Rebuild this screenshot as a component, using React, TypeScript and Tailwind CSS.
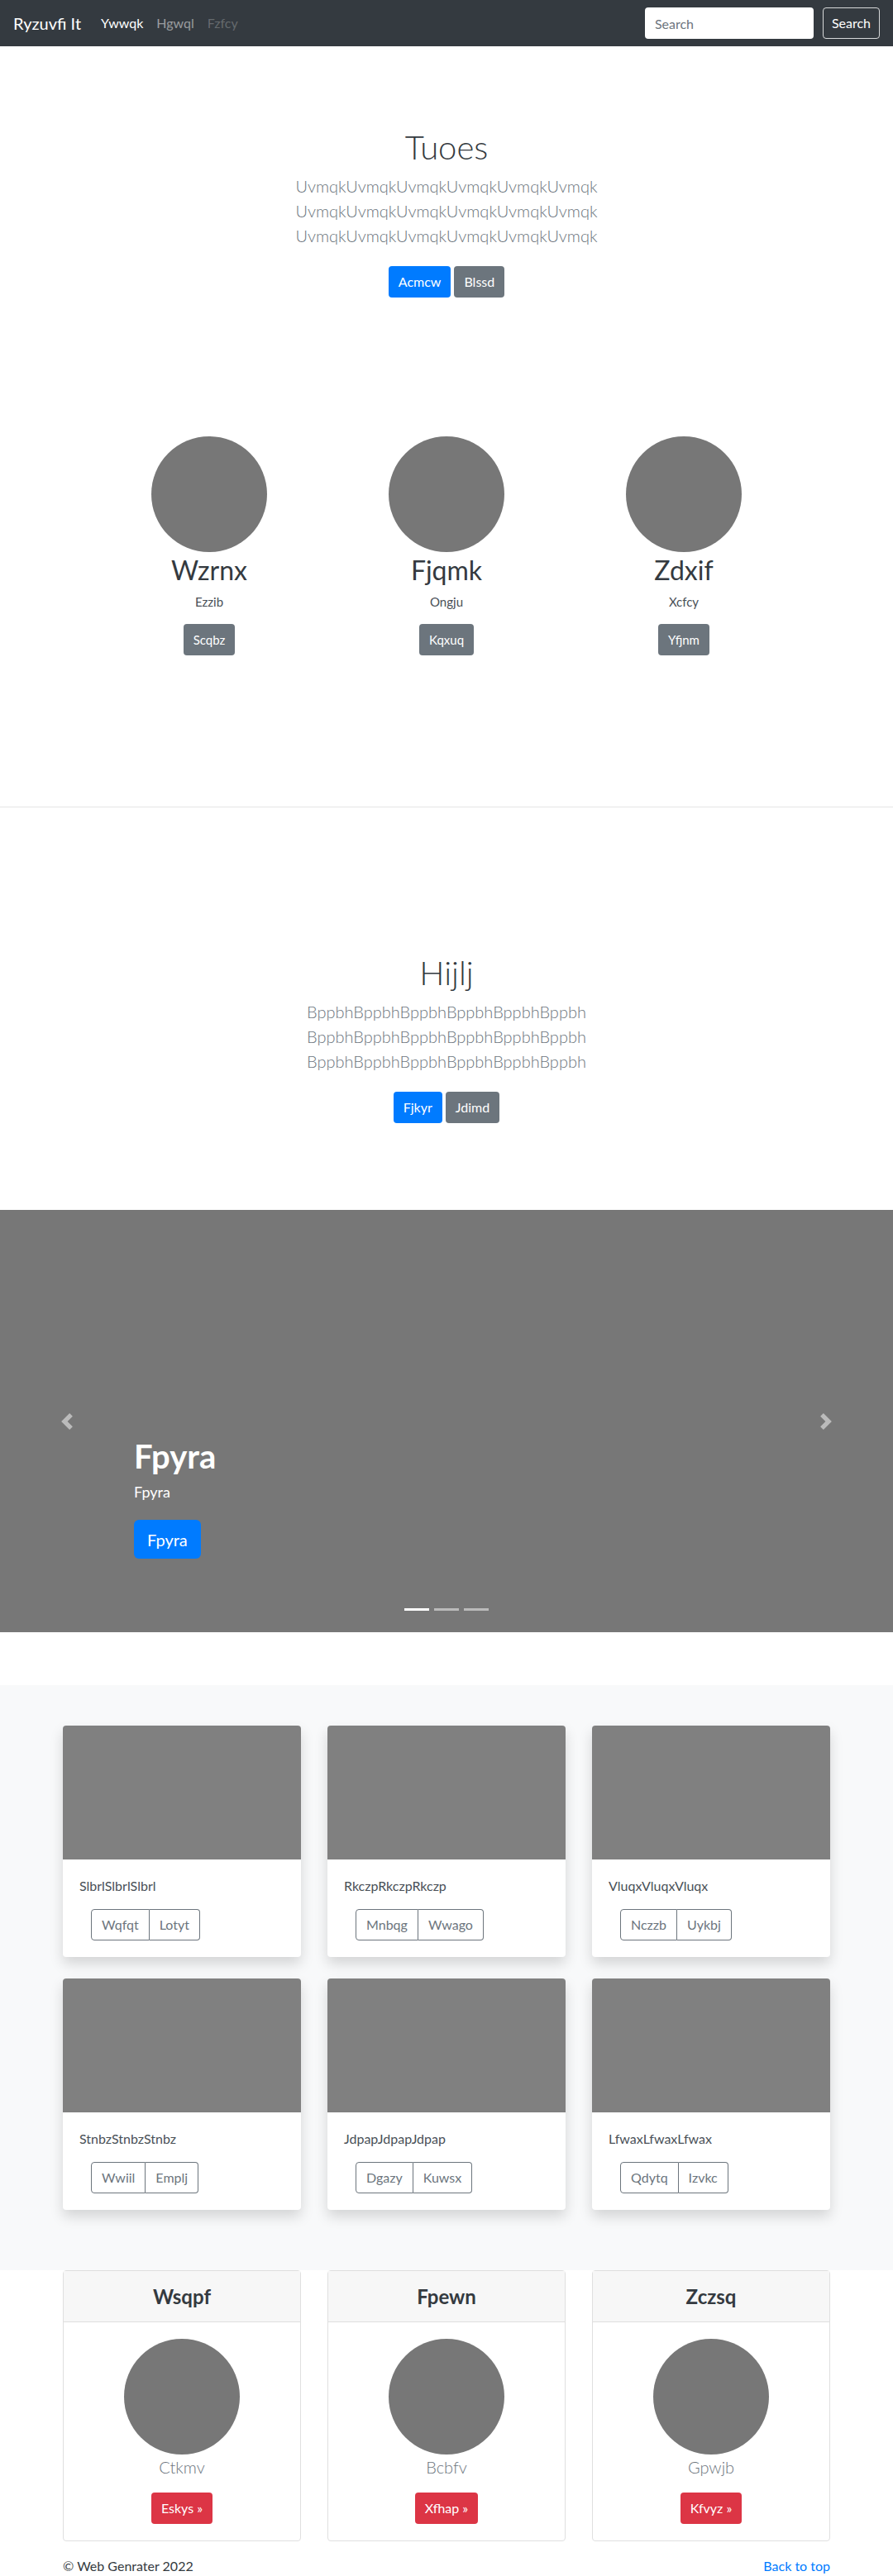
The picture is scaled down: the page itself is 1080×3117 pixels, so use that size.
import React from 'react';

const font = "font-['Lato',sans-serif]";

const Chevron: React.FC<{ dir: 'left' | 'right' }> = ({ dir }) => (
  <svg width="20" height="20" viewBox="0 0 8 8" className="opacity-50">
    <path
      fill="#fff"
      d={dir === 'left' ? 'M5.25 0l-4 4 4 4 1.5-1.5L4.25 4l2.5-2.5L5.25 0z' : 'M2.75 0l-1.5 1.5L3.75 4l-2.5 2.5L2.75 8l4-4-4-4z'}
    />
  </svg>
);

const Circle: React.FC = () => <div className="w-[140px] h-[140px] rounded-full bg-[#777] mx-auto" />;

const Jumbo: React.FC<{ title: string; word: string; primary: string; secondary: string }> = ({ title, word, primary, secondary }) => (
  <div className="text-center">
    <h1 className="text-[40px] leading-[48px] font-light text-[#343a40]">{title}</h1>
    <p className="mt-2 text-[20px] leading-[30px] font-light text-[#6c757d]">
      {word.repeat(6)}
      <br />
      {word.repeat(6)}
      <br />
      {word.repeat(6)}
    </p>
    <div className="mt-[22px] flex justify-center gap-1">
      <button className="h-[38px] px-3 rounded bg-[#007bff] text-white text-base">{primary}</button>
      <button className="h-[38px] px-3 rounded bg-[#6c757d] text-white text-base">{secondary}</button>
    </div>
  </div>
);

const marketing = [
  { name: 'Wzrnx', sub: 'Ezzib', btn: 'Scqbz' },
  { name: 'Fjqmk', sub: 'Ongju', btn: 'Kqxuq' },
  { name: 'Zdxif', sub: 'Xcfcy', btn: 'Yfjnm' },
];

const album = [
  { text: 'SlbrlSlbrlSlbrl', a: 'Wqfqt', b: 'Lotyt' },
  { text: 'RkczpRkczpRkczp', a: 'Mnbqg', b: 'Wwago' },
  { text: 'VluqxVluqxVluqx', a: 'Nczzb', b: 'Uykbj' },
  { text: 'StnbzStnbzStnbz', a: 'Wwiil', b: 'Emplj' },
  { text: 'JdpapJdpapJdpap', a: 'Dgazy', b: 'Kuwsx' },
  { text: 'LfwaxLfwaxLfwax', a: 'Qdytq', b: 'Izvkc' },
];

const pricing = [
  { head: 'Wsqpf', name: 'Ctkmv', btn: 'Eskys »' },
  { head: 'Fpewn', name: 'Bcbfv', btn: 'Xfhap »' },
  { head: 'Zczsq', name: 'Gpwjb', btn: 'Kfvyz »' },
];

const App: React.FC = () => {
  return (
    <div className={`${font} bg-white text-[#212529] text-base w-[1080px]`}>
      {/* Navbar */}
      <nav className="h-14 bg-[#343a40] flex items-center px-4">
        <span className="text-[20px] text-white mr-4">Ryzuvfi It</span>
        <div className="flex">
          <span className="px-2 text-white">Ywwqk</span>
          <span className="px-2 text-white/50">Hgwql</span>
          <span className="px-2 text-white/25">Fzfcy</span>
        </div>
        <div className="ml-auto flex items-center">
          <input
            placeholder="Search"
            className="w-[204px] h-[38px] rounded bg-white px-3 text-base text-[#495057] placeholder:text-[#6c757d] outline-none mr-[11px]"
          />
          <button className="h-[38px] px-[10px] rounded border border-white/80 text-white">Search</button>
        </div>
      </nav>

      {/* Jumbotron 1 */}
      <section className="pt-[98px]">
        <Jumbo title="Tuoes" word="Uvmqk" primary="Acmcw" secondary="Blssd" />
      </section>

      {/* Marketing */}
      <section className="mt-[168px] pb-[183px]">
        <div className="w-[861px] mx-auto grid grid-cols-3">
          {marketing.map(m => (
            <div key={m.name} className="text-center">
              <Circle />
              <h2 className="mt-[3px] text-[32px] leading-[38px] text-[#343a40]">{m.name}</h2>
              <p className="mt-[7px] text-[15px] leading-6 text-[#495057]">{m.sub}</p>
              <button className="mt-[15px] h-[38px] px-3 rounded bg-[#6c757d] text-white text-[15px]">{m.btn}</button>
            </div>
          ))}
        </div>
      </section>

      <hr className="border-t border-[#e5e5e5]" />

      {/* Jumbotron 2 */}
      <section className="pt-[176px] pb-[105px]">
        <Jumbo title="Hijlj" word="Bppbh" primary="Fjkyr" secondary="Jdimd" />
      </section>

      {/* Carousel */}
      <section className="relative h-[511px] bg-[#777]">
        <div className="absolute left-0 top-0 h-full w-[15%] flex items-center justify-center">
          <Chevron dir="left" />
        </div>
        <div className="absolute right-0 top-0 h-full w-[15%] flex items-center justify-center">
          <Chevron dir="right" />
        </div>
        <div className="absolute left-[162px] bottom-[89px] text-white">
          <h1 className="text-[40px] leading-[48px] font-bold">Fpyra</h1>
          <p className="mt-[6px] text-[18px] leading-[27px]">Fpyra</p>
          <button className="mt-[20px] h-[47px] px-4 rounded-md bg-[#007bff] text-[20px] text-white">Fpyra</button>
        </div>
        <div className="absolute bottom-[26px] left-0 right-0 flex justify-center gap-[6px]">
          <span className="w-[30px] h-[3px] bg-white" />
          <span className="w-[30px] h-[3px] bg-white/50" />
          <span className="w-[30px] h-[3px] bg-white/50" />
        </div>
      </section>

      {/* Album */}
      <section className="mt-16 bg-[#f8f9fa] pt-[49px] pb-[47px]">
        <div className="w-[960px] mx-auto grid grid-cols-3">
          {album.map(c => (
            <div key={c.text} className="px-4 mb-[26px]">
              <div className="bg-white rounded shadow-[0_8px_16px_rgba(0,0,0,0.15)] overflow-hidden">
                <div className="h-[162px] bg-[#808080]" />
                <div className="p-5">
                  <p className="text-base leading-6 text-[#495057]">{c.text}</p>
                  <div className="mt-4 ml-[14px] flex w-fit">
                    <button className="h-[38px] px-3 border border-[#6c757d] rounded-l text-[#6c757d] text-base">{c.a}</button>
                    <button className="h-[38px] px-3 border border-l-0 border-[#6c757d] rounded-r text-[#6c757d] text-base">{c.b}</button>
                  </div>
                </div>
              </div>
            </div>
          ))}
        </div>
      </section>

      {/* Pricing */}
      <section>
        <div className="w-[960px] mx-auto grid grid-cols-3">
          {pricing.map(p => (
            <div key={p.head} className="px-4">
              <div className="border border-[#dfdfdf] rounded text-center">
                <div className="bg-[#f7f7f7] border-b border-[#dfdfdf] py-4">
                  <h4 className="text-[24px] leading-[29px] font-bold text-[#343a40]">{p.head}</h4>
                </div>
                <div className="p-5">
                  <Circle />
                  <p className="text-[20px] leading-[30px] font-light text-[#6c757d]">{p.name}</p>
                  <button className="mt-4 h-[38px] px-3 rounded bg-[#dc3545] text-white text-base">{p.btn}</button>
                </div>
              </div>
            </div>
          ))}
        </div>
      </section>

      {/* Footer */}
      <footer className="w-[960px] mx-auto px-4 pt-[18px] flex justify-between text-base leading-6">
        <span className="text-[#343a40]">© Web Genrater 2022</span>
        <span className="text-[#007bff]">Back to top</span>
      </footer>
    </div>
  );
};

export default App;
